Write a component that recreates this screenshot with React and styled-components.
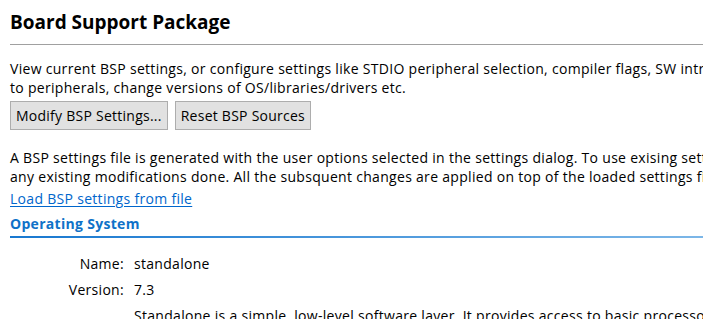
import React from 'react';
import styled, { createGlobalStyle } from 'styled-components';

const GlobalStyle = createGlobalStyle`
  body {
    margin: 0;
    background: #ffffff;
    font-family: "Open Sans", "Noto Sans", sans-serif;
    color: #000000;
    overflow: hidden;
  }
`;

const Page = styled.div`
  padding: 0 0 0 10px;
  width: 1000px;
  font-size: 14px;
  letter-spacing: 0.3px;
`;

const Title = styled.h1`
  margin: 0;
  padding-top: 8px;
  font-size: 19px;
  line-height: 28px;
  font-weight: 700;
  letter-spacing: 0;
  height: 36px;
  border-bottom: 1px solid #a0a0a0;
`;

const Para = styled.p`
  margin: 0;
  padding-top: ${(p) => p.$top}px;
  line-height: 19px;
  white-space: nowrap;
`;

const ButtonRow = styled.div`
  display: flex;
  gap: 7px;
  margin-top: 4px;
`;

const Button = styled.button`
  font-family: inherit;
  font-size: 14px;
  letter-spacing: 0.25px;
  height: 29px;
  padding: 0 5px;
  background: #e1e1e1;
  border: 1px solid #adadad;
  color: #000;
  border-radius: 0;
`;

const Link = styled.a`
  display: inline-block;
  margin-top: 3px;
  color: #0066cc;
  line-height: 19px;
  text-decoration: underline;
  text-underline-offset: 2px;
`;

const Section = styled.div`
  margin-top: 6px;
  padding-bottom: 3px;
  color: #0f72c8;
  font-weight: 700;
  line-height: 19px;
  border-bottom: 2px solid transparent;
  border-image: linear-gradient(to right, #1878d0, #a8d2f2) 1;
`;

const Props = styled.div`
  display: grid;
  grid-template-columns: 114px 1fr;
  column-gap: 10px;
  row-gap: 7px;
  margin-top: 16px;
  line-height: 19px;
`;

const Label = styled.div`
  text-align: right;
  align-self: center;
`;

const Value = styled.div`
  white-space: nowrap;
`;

export default function App() {
  return (
    <>
      <GlobalStyle />
      <Page>
        <Title>Board Support Package</Title>
        <Para $top={14}>
          View current BSP settings, or configure settings like STDIO peripheral selection, compiler flags, SW intrusive profiling, add/remove libraries, assign drivers
          <br />
          to peripherals, change versions of OS/libraries/drivers etc.
        </Para>
        <ButtonRow>
          <Button>Modify BSP Settings...</Button>
          <Button>Reset BSP Sources</Button>
        </ButtonRow>
        <Para $top={18}>
          A BSP settings file is generated with the user options selected in the settings dialog. To use exising settings file, load it. This will overwrite
          <br />
          any existing modifications done. All the subsquent changes are applied on top of the loaded settings file.
        </Para>
        <Link href="#">Load BSP settings from file</Link>
        <Section>Operating System</Section>
        <Props>
          <Label>Name:</Label>
          <Value>standalone</Value>
          <Label>Version:</Label>
          <Value>7.3</Value>
          <Label>Description:</Label>
          <Value>
            Standalone is a simple, low-level software layer. It provides access to basic processor features such as caches, interrupts and exceptions
            <br />
            as well as the basic features of a hosted environment.
          </Value>
        </Props>
      </Page>
    </>
  );
}
